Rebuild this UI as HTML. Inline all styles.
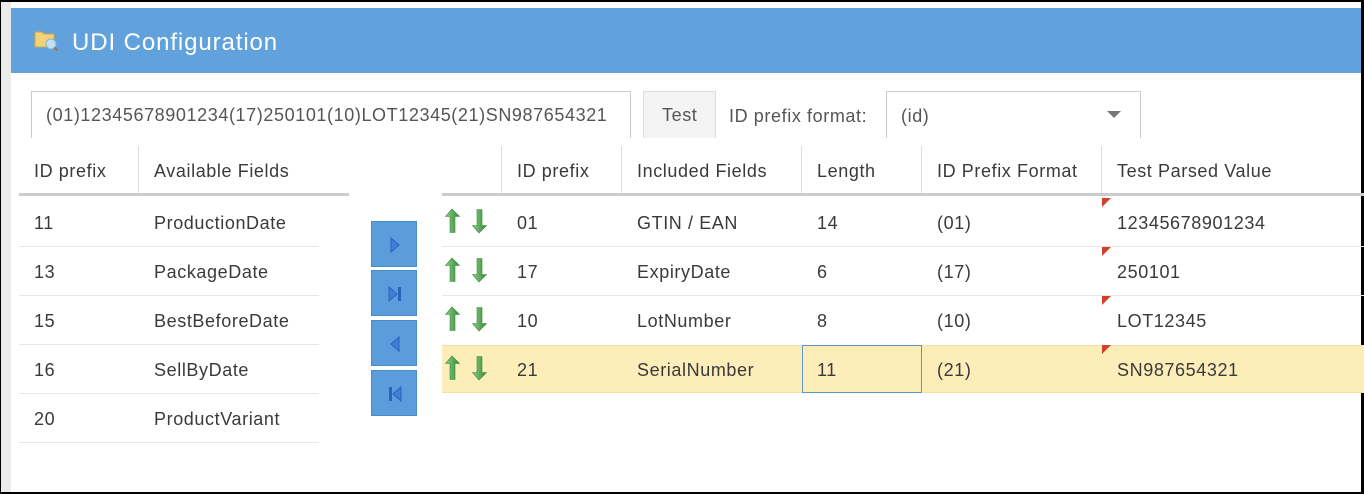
<!DOCTYPE html>
<html><head><meta charset="utf-8"><style>
*{margin:0;padding:0;box-sizing:border-box}
body{width:1364px;height:494px;background:#fff;font-family:"Liberation Sans",sans-serif;color:#3a3a3a;font-size:18px;position:relative;overflow:hidden}
.a{position:absolute}
.t{position:absolute;white-space:nowrap;line-height:20px;letter-spacing:0.6px}
.hl{position:absolute;height:1px;background:#e6e6e6}
.vl{position:absolute;width:1px;background:#ddd}
.btn{position:absolute;left:371px;width:46px;height:46px;background:#5b9ddc;border:1px solid #4a8bc9}
</style></head><body>
<div class="a" style="left:0;top:0;width:1364px;height:2px;background:#000"></div>
<div class="a" style="left:0;top:0;width:1px;height:494px;background:#000"></div>
<div class="a" style="left:1px;top:2px;width:10px;height:491px;background:#ebebeb"></div>
<div class="a" style="left:0;top:492px;width:1364px;height:2px;background:#000"></div>
<div class="a" style="left:1361px;top:0;width:3px;height:494px;background:#000"></div>
<div class="a" style="left:11px;top:8px;width:1350px;height:65px;background:#62a2dc"></div>
<svg class="a" style="left:34px;top:29px" width="26" height="24" viewBox="0 0 26 24"><path d="M1 3h7l2 2h10v13H1z" fill="#f3d27a" stroke="#c9a548"/><circle cx="17" cy="15" r="5" fill="#bfe0f5" stroke="#8fb4cc"/><path d="M20.5 18.5l3 3" stroke="#a0744a" stroke-width="2"/></svg>
<div class="t" style="left:72px;top:31px;font-size:24px;line-height:24px;color:#fff;letter-spacing:0.9px">UDI Configuration</div>

<div class="a" style="left:31px;top:91px;width:600px;height:47px;border:1px solid #ccc;border-bottom:none"></div>
<div class="t" style="left:46px;top:105px;color:#555">(01)12345678901234(17)250101(10)LOT12345(21)SN987654321</div>
<div class="a" style="left:643px;top:91px;width:73px;height:47px;background:#f4f4f4;border:1px solid #ddd;border-bottom:none"></div>
<div class="t" style="left:662px;top:105px;color:#555">Test</div>
<div class="t" style="left:729px;top:106px;color:#555">ID prefix format:</div>
<div class="a" style="left:886px;top:91px;width:255px;height:47px;border:1px solid #ccc;border-bottom:none"></div>
<div class="t" style="left:901px;top:106px;color:#555">(id)</div>
<div class="a" style="left:1107px;top:111px;width:0;height:0;border-left:7px solid transparent;border-right:7px solid transparent;border-top:7px solid #777"></div>

<div class="vl" style="left:138px;top:146px;height:48px"></div>
<div class="t" style="left:34px;top:161px">ID prefix</div>
<div class="t" style="left:154px;top:161px">Available Fields</div>
<div class="a" style="left:19px;top:193px;width:330px;height:3px;background:#ccc"></div>
<div class="t" style="left:34px;top:213px">11</div><div class="t" style="left:154px;top:213px">ProductionDate</div>
<div class="hl" style="left:19px;top:246px;width:300px"></div>
<div class="t" style="left:34px;top:262px">13</div><div class="t" style="left:154px;top:262px">PackageDate</div>
<div class="hl" style="left:19px;top:295px;width:300px"></div>
<div class="t" style="left:34px;top:311px">15</div><div class="t" style="left:154px;top:311px">BestBeforeDate</div>
<div class="hl" style="left:19px;top:344px;width:300px"></div>
<div class="t" style="left:34px;top:360px">16</div><div class="t" style="left:154px;top:360px">SellByDate</div>
<div class="hl" style="left:19px;top:393px;width:300px"></div>
<div class="t" style="left:34px;top:409px">20</div><div class="t" style="left:154px;top:409px">ProductVariant</div>
<div class="hl" style="left:19px;top:442px;width:300px"></div>

<div class="btn" style="top:221px"><svg width="46" height="46"><path d="M19 16l8 7-8 7z" fill="#3f7fd6" stroke="#2a62c0"/></svg></div>
<div class="btn" style="top:270px"><svg width="46" height="46"><path d="M17 16l8 7-8 7z" fill="#3f7fd6" stroke="#2a62c0"/><rect x="26" y="16" width="3" height="14" fill="#2a62c0"/></svg></div>
<div class="btn" style="top:320px"><svg width="46" height="46"><path d="M27 16l-8 7 8 7z" fill="#3f7fd6" stroke="#2a62c0"/></svg></div>
<div class="btn" style="top:370px"><svg width="46" height="46"><path d="M29 16l-8 7 8 7z" fill="#3f7fd6" stroke="#2a62c0"/><rect x="17" y="16" width="3" height="14" fill="#2a62c0"/></svg></div>

<div class="vl" style="left:501px;top:146px;height:48px"></div>
<div class="vl" style="left:621px;top:146px;height:48px"></div>
<div class="vl" style="left:801px;top:146px;height:48px"></div>
<div class="vl" style="left:921px;top:146px;height:48px"></div>
<div class="vl" style="left:1101px;top:146px;height:48px"></div>
<div class="t" style="left:517px;top:161px">ID prefix</div>
<div class="t" style="left:637px;top:161px">Included Fields</div>
<div class="t" style="left:817px;top:161px">Length</div>
<div class="t" style="left:937px;top:161px">ID Prefix Format</div>
<div class="t" style="left:1117px;top:161px">Test Parsed Value</div>
<div class="a" style="left:442px;top:193px;width:922px;height:3px;background:#ccc"></div>
<div class="a" style="left:442px;top:345px;width:922px;height:48px;background:#fdedb9;border-top:1px solid #f3e0a0;border-bottom:1px solid #f3e0a0"></div>
<div class="a" style="left:802px;top:345px;width:120px;height:48px;border:1px solid #5b95cc"></div>
<div class="hl" style="left:442px;top:246px;width:922px"></div>
<div class="hl" style="left:442px;top:295px;width:922px"></div>

<svg class="a" style="left:442px;top:198px" width="60" height="196">
<defs><linearGradient id="g" x1="0" x2="1"><stop offset="0" stop-color="#8fcf86"/><stop offset="1" stop-color="#2f8a35"/></linearGradient>
<g id="ar"><path d="M10 11l-6.5 7.5h4.5v16h5v-16h4.5z" fill="url(#g)" stroke="#3f8a3f" stroke-width=".6"/><path d="M37 35l-6.5-7.5h4.5v-16h5v16h4.5z" fill="url(#g)" stroke="#3f8a3f" stroke-width=".6"/></g></defs>
<use href="#ar" y="0"/><use href="#ar" y="49"/><use href="#ar" y="98"/><use href="#ar" y="147"/>
</svg>

<div class="t" style="left:517px;top:213px">01</div><div class="t" style="left:637px;top:213px">GTIN / EAN</div><div class="t" style="left:817px;top:213px">14</div><div class="t" style="left:937px;top:213px">(01)</div><div class="t" style="left:1117px;top:213px">12345678901234</div>
<div class="t" style="left:517px;top:262px">17</div><div class="t" style="left:637px;top:262px">ExpiryDate</div><div class="t" style="left:817px;top:262px">6</div><div class="t" style="left:937px;top:262px">(17)</div><div class="t" style="left:1117px;top:262px">250101</div>
<div class="t" style="left:517px;top:311px">10</div><div class="t" style="left:637px;top:311px">LotNumber</div><div class="t" style="left:817px;top:311px">8</div><div class="t" style="left:937px;top:311px">(10)</div><div class="t" style="left:1117px;top:311px">LOT12345</div>
<div class="t" style="left:517px;top:360px">21</div><div class="t" style="left:637px;top:360px">SerialNumber</div><div class="t" style="left:817px;top:360px">11</div><div class="t" style="left:937px;top:360px">(21)</div><div class="t" style="left:1117px;top:360px">SN987654321</div>

<svg class="a" style="left:1102px;top:198px" width="10" height="160">
<path d="M0 0h9L0 9z" fill="#d23f2a"/><path d="M0 49h9L0 58z" fill="#d23f2a"/><path d="M0 98h9L0 107z" fill="#d23f2a"/><path d="M0 147h9L0 156z" fill="#d23f2a"/>
</svg>
</body></html>
